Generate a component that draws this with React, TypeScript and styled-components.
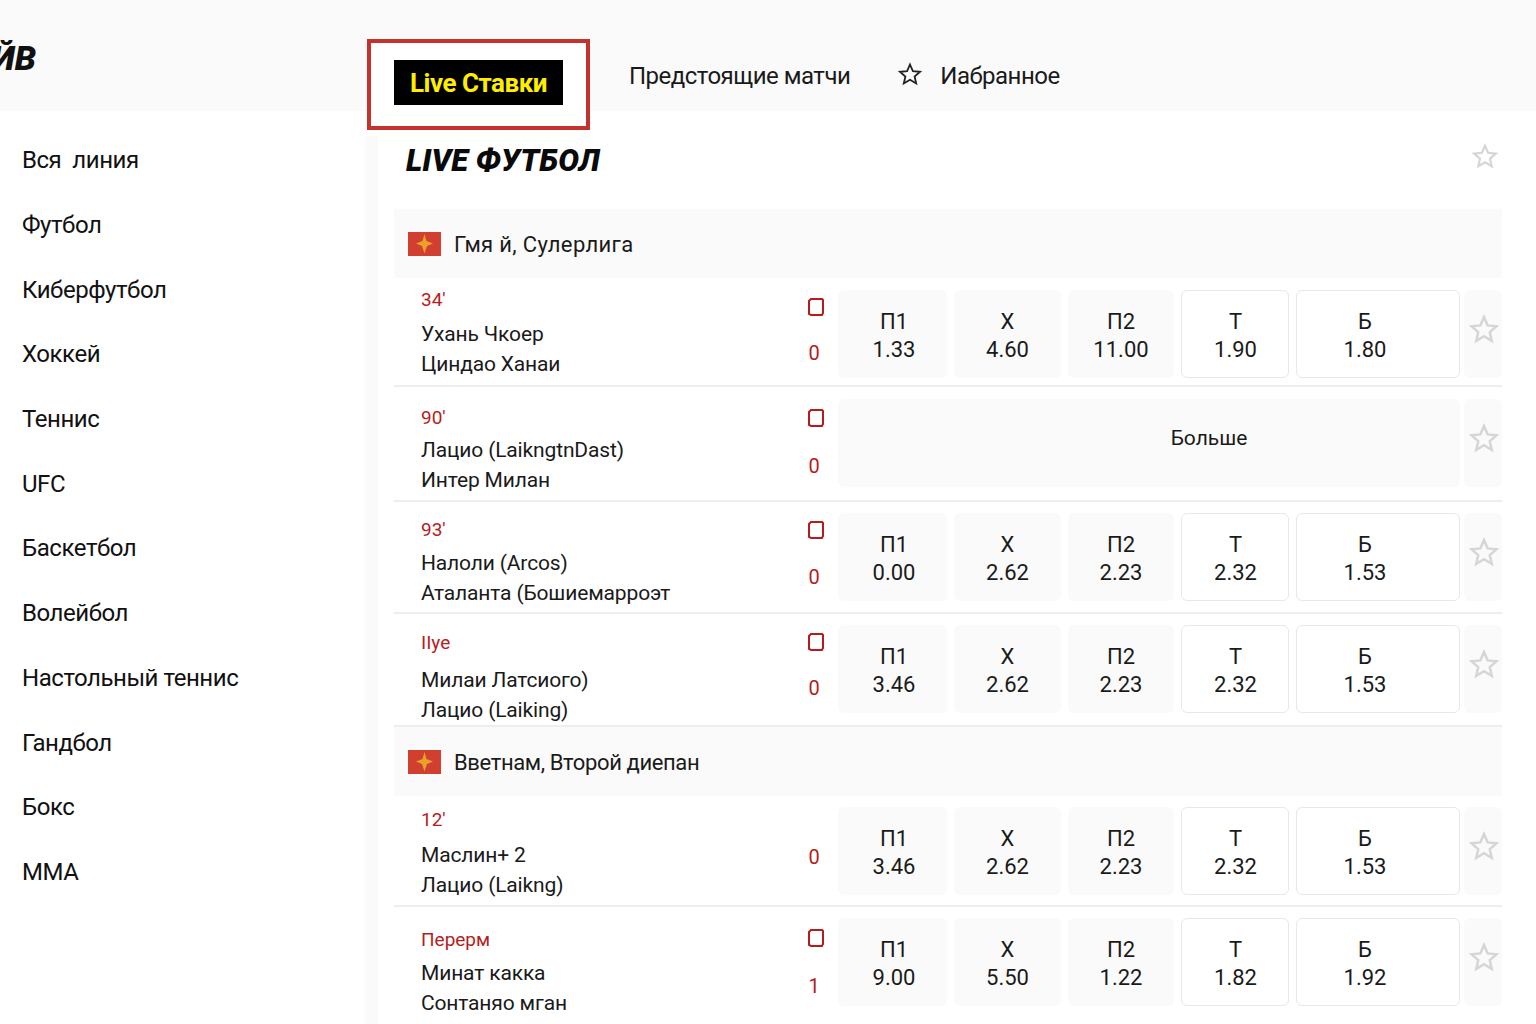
import React from "react";
import styled, { createGlobalStyle } from "styled-components";

const Global = createGlobalStyle`
  html, body { margin: 0; padding: 0; background: #fff; }
  body { font-family: Roboto, "Liberation Sans", sans-serif; color: #111; }
  * { box-sizing: border-box; }
`;
const Page = styled.div`
  width: 1536px; height: 1024px; overflow: hidden; display: flex; flex-direction: column; background: #fff;
`;
const Header = styled.header`
  height: 111px; flex: none; background: #fafafa; display: flex; align-items: flex-start; position: relative; z-index: 2;
`;
const LogoClip = styled.div`
  width: 36px; margin-top: 36px; margin-right: 331px; overflow: hidden; display: flex; justify-content: flex-end;
  font-size: 34px; line-height: 44px; font-weight: 900; font-style: italic; color: #111; white-space: nowrap;
`;
const ActiveTab = styled.div`
  width: 223px; height: 91px; margin-top: 39px; margin-right: 39px; border: 4px solid #c5312b; background: #fff;
  display: flex; align-items: center; justify-content: center; flex: none; padding-bottom: 4px;
`;
const ActiveLabel = styled.span`
  width: 169px; height: 45px; background: #000; color: #ffee00; font-size: 26px; font-weight: 700;
  display: flex; align-items: center; justify-content: center; letter-spacing: -0.5px;
`;
const NavItem = styled.a`
  display: flex; align-items: center; gap: 18px; margin-top: 59px; height: 34px; margin-right: ${p => p.$gap || 0}px;
  font-size: 24px; color: #1a1a1a; letter-spacing: -0.5px;
`;
const NavStar = styled.span`
  display: flex; margin-bottom: 5px;
`;
const Body = styled.div`
  flex: 1; display: flex; min-height: 0;
`;
const Sidebar = styled.nav`
  width: 365px; flex: none; padding: 17px 0 0 22px; display: flex; flex-direction: column;
`;
const SideItem = styled.a`
  height: 64.7px; display: flex; align-items: center; font-size: 24px; color: #111; white-space: pre; letter-spacing: -0.45px;
`;
const Gutter = styled.div`
  width: 13px; flex: none; margin-top: 25px; background: #fafafa;
`;
const Main = styled.main`
  width: 1137px; flex: none; padding: 0 13px 0 16px; display: flex; flex-direction: column;
`;
const TitleRow = styled.div`
  height: 98px; flex: none; display: flex; align-items: flex-start; justify-content: space-between; padding: 29px 4px 0 12px;
`;
const Title = styled.h1`
  margin: 0; font-size: 31px; line-height: 42px; font-weight: 900; font-style: italic; color: #0a0a0a;
`;
const TitleStar = styled.span`
  display: flex; margin-top: 3px;
`;
const Group = styled.div`
  height: ${p => p.$h}px; flex: none; background: #fafafa; display: flex; align-items: center; gap: 13px; padding-left: 14px;
  font-size: 22px; color: #1a1a1a;
`;
const GroupName = styled.span`
  margin-top: 2px; letter-spacing: ${p => p.$spacing}px; white-space: pre;
`;
const Row = styled.div`
  height: ${p => p.$h}px; flex: none; display: flex; padding-top: ${p => p.$top}px; border-bottom: 2px solid #eeeeee;
`;
const Info = styled.div`
  width: 406px; flex: none; padding-left: 27px; padding-top: ${p => p.$top}px; display: flex; flex-direction: column; align-items: flex-start;
`;
const Time = styled.div`
  font-size: 19px; line-height: 22px; color: #b71c1c; margin-bottom: ${p => p.$gap}px; margin-top: -1px;
`;
const Team = styled.div`
  font-size: 21px; line-height: 30px; color: #1a1a1a; white-space: nowrap; letter-spacing: -0.15px;
`;
const Score = styled.div`
  width: 30px; flex: none; margin-right: 8px; height: 88px; display: flex; flex-direction: column; align-items: center;
  padding-top: ${p => p.$cardTop}px; padding-bottom: ${p => p.$bottom}px;
  color: #b71c1c; font-size: 20px; line-height: 24px;
  & > svg { margin-left: 2px; }
`;
const ScoreValue = styled.span`
  margin-top: auto; margin-right: 2px;
`;
const Tiles = styled.div`
  display: grid; grid-template-columns: 109px 107px 106px 108px 164px 35px; column-gap: 7px; height: 88px;
`;
const Tile = styled.div`
  border-radius: 6px; display: flex; flex-direction: column; align-items: center; justify-content: center;
  background: ${p => (p.$outlined ? "#fff" : "#fafafa")};
  border: ${p => (p.$outlined ? "1px solid #e8e8e8" : "none")};
  padding: 4px ${p => p.$right || 0}px 0 ${p => p.$left || 0}px;
  font-size: 22px; line-height: 28px; color: #1a1a1a;
`;
const Label = styled.span``;
const More = styled.div`
  grid-column: span 5; background: #fafafa; border-radius: 6px; display: flex; align-items: center; justify-content: center;
  padding: 0 0 10px 120px; font-size: 21px; color: #1a1a1a;
`;
const StarTile = styled.div`
  width: 38px; margin-left: -3px; background: #fafafa; border-radius: 6px; display: flex; align-items: center; justify-content: center;
  padding: 0 0 10px 2px;
`;

const StarIcon = ({ size = 30, color = "#d6d6d6", sw = 2 }: { size?: number; color?: string; sw?: number }) => (
  <svg width={size} height={size} viewBox="0 0 24 24" fill="none" stroke={color} strokeWidth={sw} strokeLinejoin="miter">
    <path d="M12 2.5l2.9 6.6 7.1.7-5.4 4.7 1.6 7-6.2-3.7-6.2 3.7 1.6-7L2 9.8l7.1-.7z" />
  </svg>
);
const Card = () => (
  <svg width="16" height="18" viewBox="0 0 16 18" fill="none" stroke="#b71c1c" strokeWidth="2">
    <path d="M3 1h11l1 1v13l-1 2H3l-2-1V3z" />
  </svg>
);
const Flag = () => (
  <svg width="33" height="24" viewBox="0 0 33 24">
    <rect width="33" height="24" fill="#d13f30" />
    <path d="M16.5 2l2 7 6.5 2.5-6 2.500-2.500 7.500-2.500-7.500-6-2.500 6.500-2.500z" fill="#e9a12c" />
  </svg>
);

type M = {
  h: number; top: number; infoTop: number; gap: number; cardTop: number; bottom: number;
  time: string; a: string; b: string; score: string; card?: boolean; odds?: string[];
};
const labels = ["П1", "Х", "П2", "Т", "Б"];
const tileOffset = [{ left: 3 }, {}, {}, { left: 1 }, { right: 26 }] as { left?: number; right?: number }[];
const MatchRow = ({ m }: { m: M }) => (
  <Row $h={m.h} $top={m.top}>
    <Info $top={m.infoTop}>
      <Time $gap={m.gap}>{m.time}</Time>
      <Team>{m.a}</Team>
      <Team>{m.b}</Team>
    </Info>
    <Score $cardTop={m.cardTop} $bottom={m.bottom}>
      {m.card !== false && <Card />}
      <ScoreValue>{m.score}</ScoreValue>
    </Score>
    <Tiles>
      {m.odds ? (
        m.odds.map((o, i) => (
          <Tile key={i} $outlined={i > 2} $left={tileOffset[i].left} $right={tileOffset[i].right}>
            <Label>{labels[i]}</Label>
            {o}
          </Tile>
        ))
      ) : (
        <More>Больше</More>
      )}
      <StarTile>
        <StarIcon />
      </StarTile>
    </Tiles>
  </Row>
);

const first: M[] = [
  { h: 109, top: 12, infoTop: 0, gap: 8, cardTop: 8, bottom: 13, time: "34'", a: "Ухань Чкоер", b: "Циндао Ханаи", score: "0", odds: ["1.33", "4.60", "11.00", "1.90", "1.80"] },
  { h: 115, top: 12, infoTop: 9, gap: 6, cardTop: 10, bottom: 9, time: "90'", a: "Лацио (LaikngtnDast)", b: "Интер Милан", score: "0" },
  { h: 112, top: 11, infoTop: 7, gap: 7, cardTop: 8, bottom: 12, time: "93'", a: "Налоли (Arcos)", b: "Аталанта (Бошиемарроэт", score: "0", odds: ["0.00", "2.62", "2.23", "2.32", "1.53"] },
  { h: 113, top: 11, infoTop: 8, gap: 11, cardTop: 8, bottom: 13, time: "IIye", a: "Милаи Латсиого)", b: "Лацио (Laiking)", score: "0", odds: ["3.46", "2.62", "2.23", "2.32", "1.53"] },
];
const second: M[] = [
  { h: 111, top: 11, infoTop: 3, gap: 9, cardTop: 0, bottom: 26, time: "12'", a: "Маслин+ 2", b: "Лацио (Laikng)", score: "0", card: false, odds: ["3.46", "2.62", "2.23", "2.32", "1.53"] },
  { h: 120, top: 11, infoTop: 12, gap: 7, cardTop: 11, bottom: 8, time: "Перерм", a: "Минат какка", b: "Сонтаняо мган", score: "1", odds: ["9.00", "5.50", "1.22", "1.82", "1.92"] },
];
const sports = ["Вся  линия", "Футбол", "Киберфутбол", "Хоккей", "Теннис", "UFC", "Баскетбол", "Волейбол", "Настольный теннис", "Гандбол", "Бокс", "ММА"];

export default function App() {
  return (
    <Page>
      <Global />
      <Header>
        <LogoClip>ЛАЙВ</LogoClip>
        <ActiveTab>
          <ActiveLabel>Live Ставки</ActiveLabel>
        </ActiveTab>
        <NavItem $gap={48}>Предстоящие матчи</NavItem>
        <NavItem>
          <NavStar>
            <StarIcon size={24} color="#222" sw={1.8} />
          </NavStar>
          Иабранное
        </NavItem>
      </Header>
      <Body>
        <Sidebar>
          {sports.map(s => (
            <SideItem key={s}>{s}</SideItem>
          ))}
        </Sidebar>
        <Gutter />
        <Main>
          <TitleRow>
            <Title>LIVE ФУТБОЛ</Title>
            <TitleStar>
              <StarIcon size={26} />
            </TitleStar>
          </TitleRow>
          <Group $h={69}>
            <Flag />
            <GroupName $spacing={0.35}>Гмя й, Сулерлига</GroupName>
          </Group>
          {first.map((m, i) => (
            <MatchRow key={i} m={m} />
          ))}
          <Group $h={69}>
            <Flag />
            <GroupName $spacing={-0.38}>Вветнам, Второй диепан</GroupName>
          </Group>
          {second.map((m, i) => (
            <MatchRow key={i} m={m} />
          ))}
        </Main>
      </Body>
    </Page>
  );
}
